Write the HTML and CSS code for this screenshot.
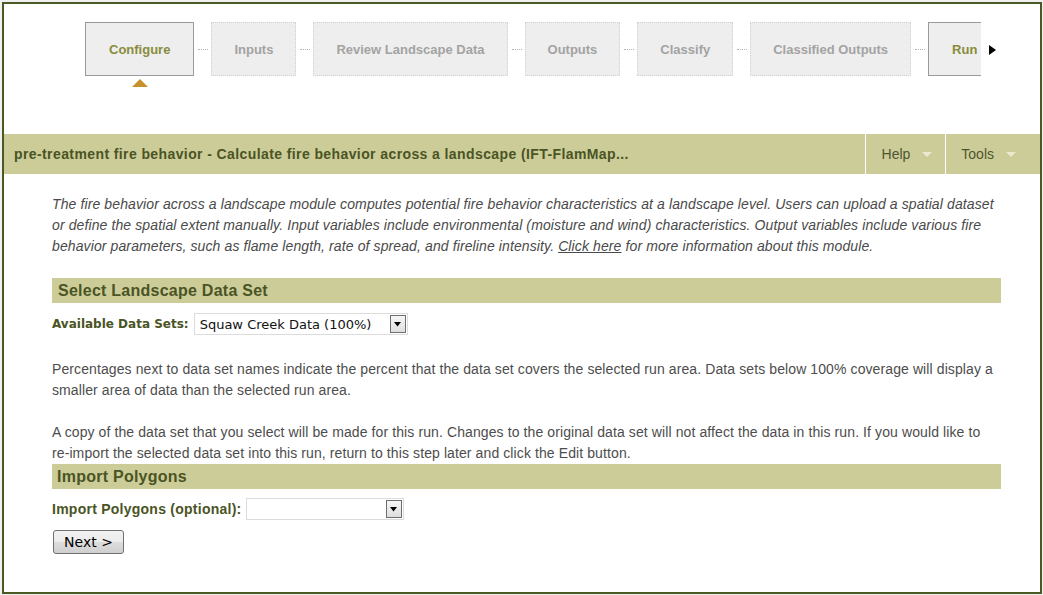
FILE: index.html
```html
<!DOCTYPE html>
<html lang="en">
<head>
<meta charset="utf-8">
<title>Configure</title>
<link rel="stylesheet" href="styles.css">
</head>
<body>
<div class="frame">
  <div class="wizard">
    <div class="steps-row">
      <div class="steps">
        <div class="step active">Configure<span class="pointer"></span></div>
        <span class="link"></span>
        <div class="step">Inputs</div>
        <span class="link"></span>
        <div class="step">Review Landscape Data</div>
        <span class="link"></span>
        <div class="step">Outputs</div>
        <span class="link"></span>
        <div class="step">Classify</div>
        <span class="link"></span>
        <div class="step">Classified Outputs</div>
        <span class="link"></span>
        <div class="step active">Run Simulation</div>
      </div>
      <span class="scroll-arrow"></span>
    </div>
  </div>

  <div class="titlebar">
    <div class="title">pre-treatment fire behavior - Calculate fire behavior across a landscape (IFT-FlamMap...</div>
    <div class="menu">
      <div class="menu-item">Help <span class="caret"></span></div>
      <div class="menu-item last">Tools <span class="caret"></span></div>
    </div>
  </div>

  <div class="content">
    <p class="intro">The fire behavior across a landscape module computes potential fire behavior characteristics at a landscape level. Users can upload a spatial dataset or define the spatial extent manually. Input variables include environmental (moisture and wind) characteristics. Output variables include various fire behavior parameters, such as flame length, rate of spread, and fireline intensity. <a href="#" class="more">Click here</a> for more information about this module.</p>

    <h2 class="section">Select Landscape Data Set</h2>
    <div class="field">
      <span class="label label-v">Available Data Sets:</span>
      <span class="select select-wide"><span class="select-text">Squaw Creek Data (100%)</span><span class="select-btn"><svg width="8" height="5" viewBox="0 0 8 5"><path d="M0 0h7L3.5 4.5z" fill="#000"/></svg></span></span>
    </div>

    <p class="note">Percentages next to data set names indicate the percent that the data set covers the selected run area. Data sets below 100% coverage will display a smaller area of data than the selected run area.</p>
    <p class="note note2">A copy of the data set that you select will be made for this run. Changes to the original data set will not affect the data in this run. If you would like to re&#8209;import the selected data set into this run, return to this step later and click the Edit button.</p>

    <h2 class="section section2">Import Polygons</h2>
    <div class="field field2">
      <span class="label label-a">Import Polygons (optional):</span>
      <span class="select select-narrow"><span class="select-text"></span><span class="select-btn"><svg width="8" height="5" viewBox="0 0 8 5"><path d="M0 0h7L3.5 4.5z" fill="#000"/></svg></span></span>
    </div>

    <button class="next" type="button">Next &gt;</button>
  </div>
</div>
</body>
</html>
```

FILE: styles.css
```css
html, body {
  margin: 0;
  padding: 0;
}
body {
  background: #f0f0f0;
  width: 1043px;
  height: 595px;
  overflow: hidden;
  font-family: "Liberation Sans", Arial, sans-serif;
}
.frame {
  box-sizing: border-box;
  width: 1040px;
  height: 592px;
  margin: 2px 0 0 2px;
  border: 2px solid #4b5a23;
  background: #fff;
}

/* wizard */
.wizard {
  height: 130px;
  box-sizing: border-box;
  padding: 18px 0 0 81px;
}
.steps-row {
  display: flex;
  align-items: flex-start;
}
.steps {
  display: flex;
  align-items: flex-start;
  width: 896px;
  height: 70px;
  overflow: hidden;
}
.step {
  position: relative;
  flex: none;
  box-sizing: border-box;
  height: 54px;
  display: flex;
  align-items: center;
  padding: 0 22px;
  background: #eeeeee;
  border: 1px dotted #cfcfcf;
  color: #a3a3a3;
  font-size: 13px;
  font-weight: bold;
  white-space: nowrap;
}
.step.active {
  border: 1px solid #9a9a9a;
  color: #878c3b;
  padding: 0 23px;
}
.pointer {
  position: absolute;
  left: 50%;
  top: 56px;
  margin-left: -8px;
  width: 0;
  height: 0;
  border-left: 8px solid transparent;
  border-right: 8px solid transparent;
  border-bottom: 8px solid #c8912c;
}
.link {
  flex: none;
  width: 10px;
  margin: 27px 3px 0 4px;
  border-top: 1px dotted #b5b5b5;
}
.scroll-arrow {
  flex: none;
  width: 0;
  height: 0;
  margin: 23px 0 0 8px;
  border-top: 5px solid transparent;
  border-bottom: 5px solid transparent;
  border-left: 7px solid #000;
}

/* title bar */
.titlebar {
  display: flex;
  align-items: stretch;
  height: 40px;
  background: #cccc99;
}
.title {
  flex: 1;
  display: flex;
  align-items: center;
  padding-left: 10px;
  color: #4a5424;
  font-size: 14px;
  font-weight: bold;
  letter-spacing: 0.4px;
  white-space: nowrap;
}
.menu {
  display: flex;
}
.menu-item {
  display: flex;
  align-items: center;
  gap: 12px;
  border-left: 1px solid #ffffff;
  padding: 0 13px 0 16px;
  color: #4f5530;
  font-size: 14px;
}
.menu-item.last {
  padding: 0 24px 0 15px;
}
.caret {
  width: 0;
  height: 0;
  border-left: 5px solid transparent;
  border-right: 5px solid transparent;
  border-top: 5px solid #e9e9cf;
}

/* content */
.content {
  padding: 0 39px 0 48px;
}
.intro {
  margin: 20px 0 0;
  font-size: 14px;
  line-height: 21px;
  font-style: italic;
  letter-spacing: 0.11px;
  color: #4a4a4a;
}
.more {
  color: #4a4a4a;
}
.section {
  margin: 21px 0 0;
  height: 25px;
  line-height: 26px;
  padding-left: 6px;
  background: #cccc99;
  color: #4a5424;
  font-size: 16px;
  font-weight: bold;
  letter-spacing: 0.25px;
}
.section2 {
  margin-top: 0;
  padding-left: 5px;
}
.field {
  display: flex;
  align-items: center;
  margin-top: 10px;
  height: 22px;
}
.field2 {
  margin-top: 9px;
}
.label {
  color: #4a5424;
  font-weight: bold;
  margin-right: 5px;
}
.label-v {
  font-family: "DejaVu Sans", Verdana, sans-serif;
  font-size: 12px;
}
.label-a {
  font-size: 14px;
  letter-spacing: 0.25px;
  margin-right: 4px;
}
.select {
  box-sizing: border-box;
  height: 22px;
  display: flex;
  align-items: center;
  justify-content: space-between;
  border: 1px solid #dcdcdc;
  padding: 0 1px 0 5px;
  background: #fff;
}
.select-wide { width: 214px; }
.select-narrow { width: 158px; }
.select-text {
  font-family: "DejaVu Sans", Verdana, sans-serif;
  font-size: 13px;
  color: #111;
}
.select-btn {
  box-sizing: border-box;
  width: 16px;
  height: 18px;
  display: flex;
  align-items: center;
  justify-content: center;
  border: 1px solid #6f6f6f;
  background: linear-gradient(#f6f6f6, #dedede);
}
.note {
  margin: 24px 0 0;
  font-size: 14px;
  line-height: 21px;
  letter-spacing: 0.1px;
  color: #4d4d4d;
}
.note2 {
  margin-top: 21px;
}
.next {
  display: block;
  margin: 10px 0 0 1px;
  box-sizing: border-box;
  width: 71px;
  height: 24px;
  padding: 0;
  border: 1px solid #707070;
  border-radius: 3px;
  background: linear-gradient(#f2f2f2 0%, #ebebeb 50%, #dddddd 51%, #cfcfcf 100%);
  font-family: "DejaVu Sans", Tahoma, sans-serif;
  font-size: 14px;
  color: #000;
}
```
